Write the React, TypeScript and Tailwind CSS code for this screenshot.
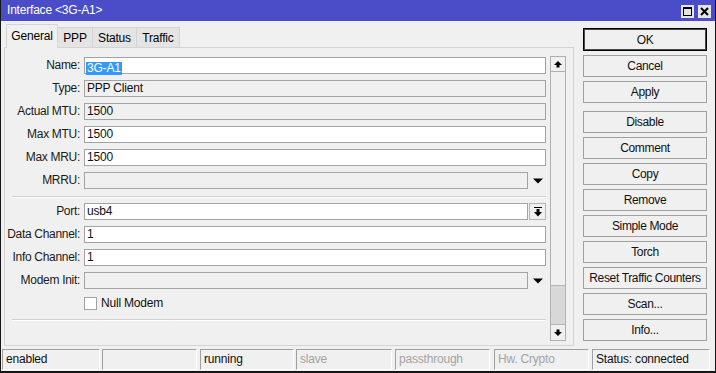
import React from "react";

const UpArrow = () => (
  <svg width="8" height="7" viewBox="0 0 8 7" className="block">
    <polygon points="4,0 8,4 0,4" fill="#000" />
    <rect x="2.5" y="4" width="3" height="2.5" fill="#000" />
  </svg>
);
const DownArrow = () => (
  <svg width="8" height="7" viewBox="0 0 8 7" className="block">
    <rect x="2.5" y="0.5" width="3" height="2.5" fill="#000" />
    <polygon points="0,3 8,3 4,7" fill="#000" />
  </svg>
);
const Tri = () => (
  <svg width="10" height="6" viewBox="0 0 10 6" className="block">
    <polygon points="0,0.5 10,0.5 5,5.5" fill="#000" />
  </svg>
);
const BarDown = () => (
  <svg width="8" height="10" viewBox="0 0 8 10" className="block">
    <rect x="0" y="0" width="8" height="1" fill="#000" />
    <rect x="2.5" y="2" width="3" height="3" fill="#000" />
    <polygon points="0,5 8,5 4,9.5" fill="#000" />
  </svg>
);

const Label = ({ children }: { children: React.ReactNode }) => (
  <div className="w-[79px] shrink-0 pr-[4px] text-right leading-[17px] text-[#1a1a1a] whitespace-nowrap tracking-[-0.3px]">
    {children}
  </div>
);

const Field = ({ value, editable = false, short = false }: { value?: React.ReactNode; editable?: boolean; short?: boolean }) => (
  <div
    className={`h-[17px] border border-[#a3a3a3] pl-[2px] leading-[15px] text-[#111] tracking-[-0.2px] ${
      editable ? "bg-white" : "bg-[#f0f0f0]"
    } ${short ? "w-[444px]" : "w-[462px]"}`}
  >
    {value}
  </div>
);

const Btn = ({ children, ok = false, className = "" }: { children: React.ReactNode; ok?: boolean; className?: string }) => (
  <div
    className={`w-[124px] flex items-center justify-center bg-[#f0f0f0] text-[#111] tracking-[-0.35px] whitespace-nowrap ${
      ok
        ? "h-[23px] border border-black shadow-[inset_0_0_0_1px_#4a4a4a]"
        : "h-[22px] border border-[#a0a0a0]"
    } ${className}`}
  >
    {children}
  </div>
);

const Cell = ({ children, w, ml, dim = false }: { children?: React.ReactNode; w: string; ml: string; dim?: boolean }) => (
  <div
    className={`h-[21px] border border-[#a0a0a0] border-b-white border-r-white pl-[3px] leading-[19px] tracking-[-0.2px] whitespace-nowrap ${w} ${ml} ${
      dim ? "text-[#a3a3a3]" : "text-[#111]"
    }`}
  >
    {children}
  </div>
);

export default function App() {
  return (
    <div className="w-[716px] h-[373px] bg-[#f0f0f0] border-l border-r border-b-2 border-[#161616] flex flex-col font-['Liberation_Sans',Arial,sans-serif] text-[12px] overflow-hidden">
      {/* Title bar */}
      <div className="h-[21px] shrink-0 bg-[#4b4dc8] flex items-center pl-[6px] pr-[4px]">
        <span className="text-white text-[12px] leading-[21px] tracking-[-0.2px]">Interface &lt;3G-A1&gt;</span>
        <div className="ml-auto flex gap-[4px] pt-[1px]">
          <svg width="13" height="13" viewBox="0 0 13 13" className="block">
            <rect x="0" y="0" width="13" height="13" fill="#e4e4e4" />
            <rect x="2.5" y="2.5" width="8" height="8" fill="none" stroke="#000" strokeWidth="1" />
            <rect x="2" y="2" width="9" height="2" fill="#000" />
          </svg>
          <svg width="13" height="13" viewBox="0 0 13 13" className="block">
            <rect x="0" y="0" width="13" height="13" fill="#e4e4e4" />
            <path d="M3 3 L10 10 M10 3 L3 10" stroke="#000" strokeWidth="2" />
          </svg>
        </div>
      </div>

      {/* Middle */}
      <div className="flex-1 flex">
        {/* Left column */}
        <div className="w-[573px] shrink-0 pl-[3px] pt-[3px] flex flex-col">
          <div className="h-[23px] flex items-end pl-[2px] tracking-[-0.2px]">
            <div className="relative z-10 w-[52px] h-[24px] -mb-[1px] bg-[#f0f0f0] border border-b-0 border-[#d4d4d4] flex items-center justify-center pb-[2px]">
              General
            </div>
            <div className="w-[35px] h-[20px] bg-[#e4e4e4] border border-l-0 border-b-0 border-[#d4d4d4] flex items-center justify-center">
              PPP
            </div>
            <div className="w-[44px] h-[20px] bg-[#e4e4e4] border border-l-0 border-b-0 border-[#d4d4d4] flex items-center justify-center">
              Status
            </div>
            <div className="w-[43px] h-[20px] bg-[#e4e4e4] border border-l-0 border-b-0 border-[#d4d4d4] flex items-center justify-center">
              Traffic
            </div>
          </div>
          <div className="w-[570px] h-[299px] border border-[#d4d4d4] flex">
            {/* Form */}
            <div className="w-[541px] pt-[9px] flex flex-col">
              <div className="flex items-center">
                <Label>Name:</Label>
                <div className="h-[17px] w-[462px] border border-[#a3a3a3] bg-white pl-[1px] pt-[1px]">
                  <span className="inline-block bg-[#3399ff] text-white leading-[13px] px-[1px] tracking-[-0.2px]">3G-A1</span>
                </div>
              </div>
              <div className="flex items-center mt-[6px]">
                <Label>Type:</Label>
                <Field value="PPP Client" />
              </div>
              <div className="flex items-center mt-[6px]">
                <Label>Actual MTU:</Label>
                <Field value="1500" />
              </div>
              <div className="flex items-center mt-[6px]">
                <Label>Max MTU:</Label>
                <Field value="1500" editable />
              </div>
              <div className="flex items-center mt-[6px]">
                <Label>Max MRU:</Label>
                <Field value="1500" editable />
              </div>
              <div className="flex items-center mt-[6px]">
                <Label>MRRU:</Label>
                <Field short />
                <div className="w-[18px] flex justify-center pl-[1px]">
                  <Tri />
                </div>
              </div>
              <div className="ml-[7px] w-[534px] mt-[7px] border-t border-[#d0d0d0] border-b border-b-white" />
              <div className="flex items-center mt-[5px]">
                <Label>Port:</Label>
                <Field value="usb4" editable short />
                <div className="w-[17px] h-[17px] ml-[1px] border border-[#b5b5b5] flex items-center justify-center">
                  <BarDown />
                </div>
              </div>
              <div className="flex items-center mt-[6px]">
                <Label>Data Channel:</Label>
                <Field value="1" editable />
              </div>
              <div className="flex items-center mt-[6px]">
                <Label>Info Channel:</Label>
                <Field value="1" editable />
              </div>
              <div className="flex items-center mt-[6px]">
                <Label>Modem Init:</Label>
                <Field short />
                <div className="w-[18px] flex justify-center pl-[1px]">
                  <Tri />
                </div>
              </div>
              <div className="flex items-center mt-[8px] pl-[79px]">
                <div className="w-[13px] h-[13px] border border-[#a3a3a3] bg-white" />
                <span className="ml-[4px] text-[#111] leading-[13px] tracking-[-0.2px]">Null Modem</span>
              </div>
              <div className="ml-[7px] w-[534px] mt-[9px] border-t border-[#d0d0d0] border-b border-b-white" />
            </div>
            {/* Scrollbar */}
            <div className="ml-[4px] mt-[8px] w-[16px] h-[285px] border border-[#b0b0b0] flex flex-col bg-[#f0f0f0]">
              <div className="h-[15px] border-b border-[#b0b0b0] flex items-center justify-center">
                <UpArrow />
              </div>
              <div className="flex-1" />
              <div className="h-[40px] bg-[#d8d8d8] border-y border-[#b5b5b5]" />
              <div className="h-[15px] flex items-center justify-center">
                <DownArrow />
              </div>
            </div>
          </div>
        </div>

        {/* Right buttons */}
        <div className="pl-[9px] pt-[7px] flex flex-col">
          <Btn ok>OK</Btn>
          <Btn className="mt-[4px]">Cancel</Btn>
          <Btn className="mt-[4px]">Apply</Btn>
          <Btn className="mt-[8px]">Disable</Btn>
          <Btn className="mt-[4px]">Comment</Btn>
          <Btn className="mt-[4px]">Copy</Btn>
          <Btn className="mt-[4px]">Remove</Btn>
          <Btn className="mt-[4px]">Simple Mode</Btn>
          <Btn className="mt-[4px]">Torch</Btn>
          <Btn className="mt-[4px]">Reset Traffic Counters</Btn>
          <Btn className="mt-[4px]">Scan...</Btn>
          <Btn className="mt-[4px]">Info...</Btn>
        </div>
      </div>

      {/* Status bar */}
      <div className="h-[22px] shrink-0 flex items-start pl-[1px]">
        <Cell w="w-[98px]" ml="ml-0">enabled</Cell>
        <Cell w="w-[95px]" ml="ml-[2px]" />
        <Cell w="w-[94px]" ml="ml-[3px]">running</Cell>
        <Cell w="w-[96px]" ml="ml-[2px]" dim>slave</Cell>
        <Cell w="w-[95px]" ml="ml-[3px]" dim>passthrough</Cell>
        <Cell w="w-[95px]" ml="ml-[4px]" dim>Hw. Crypto</Cell>
        <Cell w="w-[118px]" ml="ml-[3px]">Status: connected</Cell>
      </div>
    </div>
  );
}
